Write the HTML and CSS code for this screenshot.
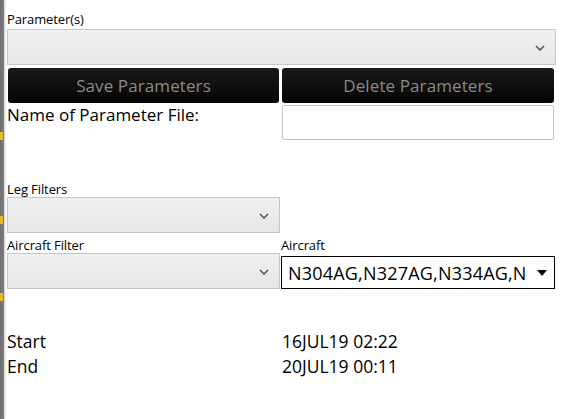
FILE: index.html
```html
<!DOCTYPE html>
<html>
<head>
<meta charset="utf-8">
<link rel="stylesheet" href="styles.css">
</head>
<body>
<div class="page">
  <div class="strip">
    <span class="mark m1"></span>
    <span class="mark m2"></span>
    <span class="mark m3"></span>
  </div>
  <div class="main">
    <div class="label top-label">Parameter(s)</div>
    <div class="combo wide">
      <svg class="chev" width="10" height="6" viewBox="0 0 10 6"><polyline points="1,1 5,5 9,1" fill="none" stroke="#555" stroke-width="1.6"/></svg>
    </div>
    <div class="buttons">
      <div class="btn">Save Parameters</div>
      <div class="btn">Delete Parameters</div>
    </div>
    <div class="name-row">
      <div class="big">Name of Parameter File:</div>
      <div class="textbox"></div>
    </div>
    <div class="label leg-label">Leg Filters</div>
    <div class="combo half">
      <svg class="chev" width="10" height="6" viewBox="0 0 10 6"><polyline points="1,1 5,5 9,1" fill="none" stroke="#555" stroke-width="1.6"/></svg>
    </div>
    <div class="pair">
      <div class="col">
        <div class="label">Aircraft Filter</div>
        <div class="combo half">
          <svg class="chev" width="10" height="6" viewBox="0 0 10 6"><polyline points="1,1 5,5 9,1" fill="none" stroke="#555" stroke-width="1.6"/></svg>
        </div>
      </div>
      <div class="col">
        <div class="label">Aircraft</div>
        <div class="select">
          <span class="sel-text">N304AG,N327AG,N334AG,N</span>
          <svg class="tri" width="10" height="6" viewBox="0 0 10 6"><polygon points="0,0 10,0 5,6" fill="#000"/></svg>
        </div>
      </div>
    </div>
    <div class="times">
      <div class="trow"><span class="tlabel">Start</span><span class="tval">16JUL19 02:22</span></div>
      <div class="trow"><span class="tlabel">End</span><span class="tval">20JUL19 00:11</span></div>
    </div>
  </div>
</div>
</body>
</html>
```
FILE: styles.css
```css
* { box-sizing: border-box; }
html, body { margin: 0; padding: 0; background: #fff; }
body { font-family: "Open Sans", "Noto Sans", sans-serif; color: #000; }
.page { display: flex; width: 561px; height: 419px; overflow: hidden; }
.strip {
  width: 6px; flex: none; position: relative;
  background: linear-gradient(to right, #6f6f6f 0, #7d7d7d 4px, #d8d8d8 4px, #f2f2f2 6px);
}
.mark { position: absolute; left: 0; width: 3px; height: 8px; background: #e8b820; }
.m1 { top: 132px; }
.m2 { top: 216px; }
.m3 { top: 293px; }
.main { flex: 1; padding: 11px 0 0 1px; width: 549px; }
.label { font-size: 13px; line-height: 16px; height: 16px; letter-spacing: -0.1px; color: #000; white-space: nowrap; }
.top-label { margin-bottom: 2px; }
.combo {
  position: relative; height: 36px;
  background: linear-gradient(#f0f0f0, #e6e6e6);
  border: 1px solid #c6c6c6;
}
.combo.wide { width: 549px; }
.combo.half { width: 273px; }
.chev { position: absolute; right: 10px; top: 15px; }
.buttons { display: flex; gap: 3px; margin-top: 3px; padding-left: 1px; }
.btn {
  width: 271px; height: 35px; border-radius: 3px;
  background: linear-gradient(#1a1a1a, #050505);
  color: #8a8a8a; font-size: 17px; line-height: 35px; text-align: center;
  letter-spacing: 0.1px;
}
.btn + .btn { width: 272px; }
.name-row { display: flex; justify-content: space-between; margin-top: 2px; width: 547px; }
.big { font-size: 17px; line-height: 22px; margin-top: -1px; }
.textbox { width: 272px; height: 35px; border: 1px solid #c4c4c4; border-radius: 2px; background: #fff; }
.leg-label { margin-top: 41px; }
.pair { display: flex; gap: 0; margin-top: 4px; }
.col { width: 274px; }
.select {
  margin-top: 3px; width: 274px; height: 33px; border: 1px solid #000;
  display: flex; align-items: center; justify-content: space-between;
  padding: 0 7px 0 6px; font-size: 18px; letter-spacing: 0.2px; white-space: nowrap;
}
.tri { flex: none; }
.times { margin-top: 40px; }
.trow { display: flex; font-size: 17.5px; line-height: 25px; }
.tlabel { width: 275px; }
```
